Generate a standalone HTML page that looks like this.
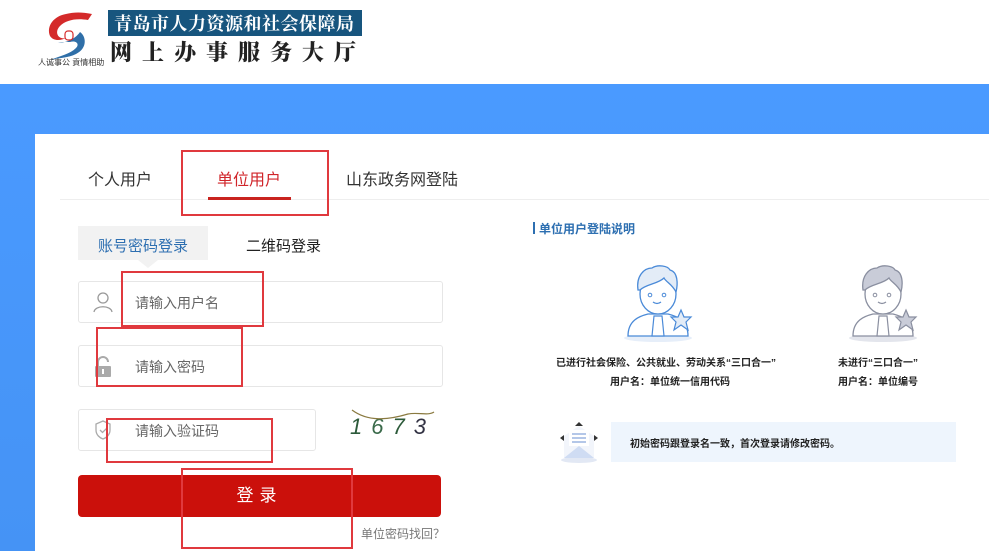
<!DOCTYPE html>
<html><head><meta charset="utf-8"><style>
*{margin:0;padding:0;box-sizing:border-box}
body{width:989px;height:551px;overflow:hidden;position:relative;background:#fff;font-family:"Liberation Sans","Noto Sans CJK SC",sans-serif}
.a{position:absolute}
.rb{position:absolute;border:2px solid #e0393e}
.inp{position:absolute;border:1px solid #e6e6e6;border-radius:3px;background:#fff}
.ph{position:absolute;font-size:14px;color:#666}
</style></head><body>
<svg class="a" style="left:36px;top:8px" width="72" height="60" viewBox="0 0 72 60">
<path d="M30 6 C18 8 10 18 14 28 C18 34 26 32 30 30 C22 32 18 24 24 18 C30 12 40 10 52 12 L56 6 C46 4 38 4 30 6Z" fill="#d42a2a"/>
<path d="M22 34 C30 36 40 30 44 24 C50 28 52 40 40 46 C32 50 22 50 14 52 C24 48 34 46 40 40 C44 36 40 32 34 34Z" fill="#2f6fa8"/>
<rect x="29" y="23" width="8" height="9" rx="3" fill="none" stroke="#d42a2a" stroke-width="1.2"/>
</svg>
<div class="a" style="left:38px;top:57px;font-size:8px;color:#333;white-space:nowrap">人诚事公 貢情相助</div>
<div class="a" style="left:108px;top:10px;width:254px;height:26px;background:#17557e;color:#fff;font-family:'Noto Serif CJK SC',serif;font-weight:bold;font-size:18px;line-height:26px;padding-left:6px;letter-spacing:0.5px">青岛市人力资源和社会保障局</div>
<div class="a" style="left:110px;top:38px;font-family:'Noto Serif CJK SC',serif;font-weight:900;font-size:22px;letter-spacing:10px;color:#222;white-space:nowrap;line-height:28px">网上办事服务大厅</div>
<div class="a" style="left:0;top:84px;width:989px;height:467px;background:linear-gradient(180deg,#4a9aff,#4593f5)"></div>
<div class="a" style="left:35px;top:134px;width:954px;height:417px;background:#fff"></div>
<div class="a" style="left:88px;top:166px;font-size:16px;color:#333">个人用户</div>
<div class="a" style="left:217px;top:166px;font-size:16px;color:#d0252a">单位用户</div>
<div class="a" style="left:346px;top:166px;font-size:16px;color:#333">山东政务网登陆</div>
<div class="a" style="left:60px;top:199px;width:929px;height:1px;background:#eee"></div>
<div class="a" style="left:208px;top:197px;width:83px;height:3px;background:#c9231f"></div>
<div class="rb" style="left:181px;top:150px;width:148px;height:66px"></div>
<div class="a" style="left:78px;top:226px;width:130px;height:34px;background:#f2f2f2"></div>
<div class="a" style="left:138px;top:260px;width:0;height:0;border-left:10px solid transparent;border-right:10px solid transparent;border-top:8px solid #f2f2f2"></div>
<div class="a" style="left:98px;top:235px;font-size:15px;color:#2d6fb1">账号密码登录</div>
<div class="a" style="left:246px;top:235px;font-size:15px;color:#222">二维码登录</div>
<div class="inp" style="left:78px;top:281px;width:365px;height:42px"></div>
<svg class="a" style="left:93px;top:291px" width="20" height="22" viewBox="0 0 20 22"><circle cx="10" cy="7" r="5" fill="none" stroke="#999" stroke-width="1.3"/><path d="M1 21 C2 14 18 14 19 21" fill="none" stroke="#999" stroke-width="1.3"/></svg>
<div class="ph" style="left:135px;top:293px">请输入用户名</div>
<div class="inp" style="left:78px;top:345px;width:365px;height:42px"></div>
<svg class="a" style="left:94px;top:356px" width="18" height="22" viewBox="0 0 18 22"><path d="M4 10 V6 a5 5 0 0 1 10 0" fill="none" stroke="#aaa" stroke-width="2"/><rect x="1" y="10" width="16" height="11" rx="1" fill="#aaa"/><rect x="8" y="13" width="2" height="5" fill="#fff"/></svg>
<div class="ph" style="left:135px;top:357px">请输入密码</div>
<div class="inp" style="left:78px;top:409px;width:238px;height:42px"></div>
<svg class="a" style="left:94px;top:420px" width="18" height="20" viewBox="0 0 18 20"><path d="M9 1 L16 4 V10 C16 15 12 18 9 19 C6 18 2 15 2 10 V4Z" fill="none" stroke="#aaa" stroke-width="1.3"/><path d="M6 10 L8.5 12.5 L13 8" fill="none" stroke="#aaa" stroke-width="1.3"/></svg>
<div class="ph" style="left:135px;top:421px">请输入验证码</div>
<div class="a" style="left:344px;top:410px;width:100px;height:40px;font-family:'Liberation Sans',sans-serif;font-size:22px;color:#2c5a3a;letter-spacing:9px;padding-top:4px;padding-left:6px;font-style:italic">1<span style="color:#3a6a4a">6</span>7<span style="color:#334">3</span></div>
<svg class="a" style="left:348px;top:408px" width="90" height="20"><path d="M4 2 C20 14 40 12 60 6 C70 4 80 8 86 4" fill="none" stroke="#8a7a40" stroke-width="1.2"/></svg>
<div class="a" style="left:78px;top:475px;width:363px;height:42px;background:#cb100b;border-radius:4px;color:#fff;font-size:17px;text-align:center;line-height:42px;letter-spacing:6px">登录</div>
<div class="a" style="left:361px;top:525px;font-size:12px;color:#777">单位密码找回？</div>
<div class="rb" style="left:121px;top:271px;width:143px;height:56px"></div>
<div class="rb" style="left:96px;top:327px;width:147px;height:60px"></div>
<div class="rb" style="left:106px;top:418px;width:167px;height:45px"></div>
<div class="rb" style="left:181px;top:468px;width:172px;height:81px"></div>
<div class="a" style="left:533px;top:222px;width:2px;height:12px;background:#2d6fb1"></div>
<div class="a" style="left:539px;top:220px;font-size:12px;font-weight:bold;color:#2d6fb1">单位用户登陆说明</div>
<svg class="a" style="left:600px;top:250px" width="120" height="100" viewBox="0 0 120 100">
<ellipse cx="58" cy="88" rx="34" ry="4" fill="#e6eef9"/>
<path d="M28 86 C28 70 40 66 48 64 L68 64 C76 66 88 70 88 86Z" fill="#fff" stroke="#4a8ad8" stroke-width="1.3"/>
<path d="M54 66 L62 66 L64 86 L52 86Z" fill="#fff" stroke="#4a8ad8" stroke-width="1.2"/>
<ellipse cx="58" cy="44" rx="18" ry="20" fill="#fff" stroke="#4a8ad8" stroke-width="1.3"/>
<path d="M38 40 C36 26 44 18 52 18 C58 14 68 16 70 20 C78 22 78 34 76 42 C72 34 66 32 64 28 C58 34 46 34 40 40Z" fill="#e3ecf7" stroke="#4a8ad8" stroke-width="1.3"/>
<circle cx="50" cy="45" r="1.8" fill="none" stroke="#4a8ad8"/><circle cx="64" cy="45" r="1.8" fill="none" stroke="#4a8ad8"/>
<path d="M53 52 Q57 55 61 52" fill="none" stroke="#4a8ad8" stroke-width="1.2"/>
<path d="M81 60 L84 67 L91 67 L86 72 L88 80 L81 75 L74 80 L76 72 L71 67 L78 67Z" fill="#e3ecf7" stroke="#4a8ad8" stroke-width="1.2"/>
</svg>
<svg class="a" style="left:825px;top:250px" width="120" height="100" viewBox="0 0 120 100">
<ellipse cx="58" cy="88" rx="34" ry="4" fill="#e3e5ec"/>
<path d="M28 86 C28 70 40 66 48 64 L68 64 C76 66 88 70 88 86Z" fill="#fff" stroke="#8a8fa0" stroke-width="1.3"/>
<path d="M54 66 L62 66 L64 86 L52 86Z" fill="#fff" stroke="#8a8fa0" stroke-width="1.2"/>
<ellipse cx="58" cy="44" rx="18" ry="20" fill="#fff" stroke="#8a8fa0" stroke-width="1.3"/>
<path d="M38 40 C36 26 44 18 52 18 C58 14 68 16 70 20 C78 22 78 34 76 42 C72 34 66 32 64 28 C58 34 46 34 40 40Z" fill="#c9ccd8" stroke="#8a8fa0" stroke-width="1.3"/>
<circle cx="50" cy="45" r="1.8" fill="none" stroke="#8a8fa0"/><circle cx="64" cy="45" r="1.8" fill="none" stroke="#8a8fa0"/>
<path d="M53 52 Q57 55 61 52" fill="none" stroke="#8a8fa0" stroke-width="1.2"/>
<path d="M81 60 L84 67 L91 67 L86 72 L88 80 L81 75 L74 80 L76 72 L71 67 L78 67Z" fill="#c9ccd8" stroke="#8a8fa0" stroke-width="1.2"/>
</svg>
<div class="a" style="left:556px;top:354px;font-size:10px;color:#222;white-space:nowrap;font-weight:bold">已进行社会保险、公共就业、劳动关系“三口合一”</div>
<div class="a" style="left:610px;top:373px;font-size:10px;color:#222;white-space:nowrap;font-weight:bold">用户名：单位统一信用代码</div>
<div class="a" style="left:838px;top:354px;font-size:10px;color:#222;white-space:nowrap;font-weight:bold">未进行“三口合一”</div>
<div class="a" style="left:838px;top:373px;font-size:10px;color:#222;white-space:nowrap;font-weight:bold">用户名：单位编号</div>
<svg class="a" style="left:558px;top:420px" width="44" height="44" viewBox="0 0 44 44">
<ellipse cx="21" cy="40" rx="18" ry="3" fill="#e2e8f4"/>
<path d="M6 16 L21 6 L36 16 V38 H6Z" fill="#f2f5fb"/>
<rect x="11" y="10" width="20" height="16" fill="#fff"/>
<path d="M14 14 H28 M14 18 H28 M14 22 H28" stroke="#6a8fd0" stroke-width="1"/>
<path d="M6 38 L21 26 L36 38Z" fill="#cfdcf3"/>
<path d="M17 6 L21 2 L25 6Z" fill="#333"/><path d="M2 18 L6 15 L6 21Z" fill="#333"/><path d="M40 18 L36 15 L36 21Z" fill="#333"/>
</svg>
<div class="a" style="left:611px;top:422px;width:345px;height:40px;background:#eef5fd"></div>
<div class="a" style="left:630px;top:435px;font-size:10px;color:#222;white-space:nowrap;font-weight:bold">初始密码跟登录名一致，首次登录请修改密码。</div>
</body></html>
